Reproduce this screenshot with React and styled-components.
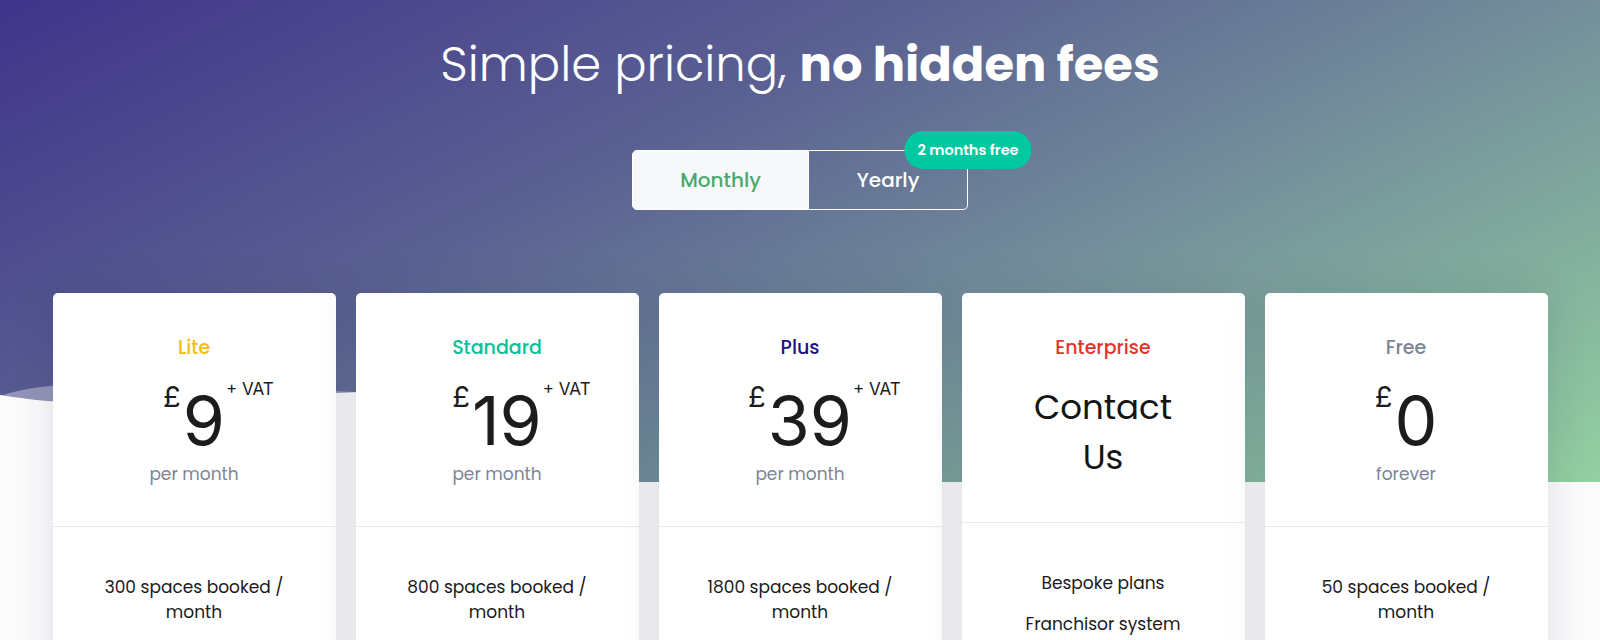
import React from "react";
import styled, { createGlobalStyle } from "styled-components";

const GlobalStyle = createGlobalStyle`
  html, body { margin: 0; padding: 0; }
  body {
    background: #fbfbfc;
    font-family: Poppins, Inter, "Open Sans", sans-serif;
    overflow: hidden;
  }
`;

const Page = styled.div`
  width: 1600px;
  min-height: 640px;
`;

const Hero = styled.header`
  position: relative;
  height: 482px;
  box-sizing: border-box;
  padding-top: 35px;
  background: linear-gradient(153deg, #40348b 0%, #5a6092 36%, #74909b 63%, #93d0a1 100%);
  display: flex;
  flex-direction: column;
  align-items: center;
`;

const Title = styled.h1`
  margin: 0;
  font-size: 48px;
  line-height: 60px;
  font-weight: 300;
  color: #fff;
  b { font-weight: 700; }
`;

const Toggle = styled.div`
  position: relative;
  display: flex;
  margin-top: 55px;
  height: 60px;
`;

const ToggleButton = styled.button`
  box-sizing: border-box;
  width: ${(p) => p.$w}px;
  height: 60px;
  border: 1px solid #fff;
  border-left-width: ${(p) => (p.$active ? 1 : 0)}px;
  border-radius: ${(p) => (p.$active ? "5px 0 0 5px" : "0 5px 5px 0")};
  background: ${(p) => (p.$active ? "#f6f8fa" : "transparent")};
  color: ${(p) => (p.$active ? "#49a86b" : "#fff")};
  font-family: inherit;
  font-size: 20px;
  font-weight: 500;
  padding: 0;
  cursor: pointer;
`;

const Badge = styled.span`
  position: absolute;
  left: 100%;
  top: 0;
  transform: translate(-50%, -50%);
  height: 38px;
  padding: 0 13px;
  border-radius: 19px;
  background: #00c8a0;
  color: #fff;
  font-size: 14.5px;
  font-weight: 600;
  line-height: 38px;
  white-space: nowrap;
`;

const Wave = styled.svg`
  position: absolute;
  left: 0;
  bottom: 0;
  width: 100%;
  height: 110px;
  display: block;
`;

const Cards = styled.section`
  position: relative;
  display: grid;
  grid-template-columns: repeat(5, 283px);
  gap: 20px;
  justify-content: center;
  margin-top: -189px;
`;

const Card = styled.article`
  background: #fff;
  border-radius: 5px;
  box-shadow: 0 0 40px rgba(28, 36, 70, 0.13);
  min-height: 420px;
`;

const CardHead = styled.div`
  padding: 40px 20px;
  text-align: center;
  border-bottom: 1px solid #e7e9ec;
`;

const PlanName = styled.div`
  font-size: 19px;
  line-height: 30px;
  font-weight: 500;
  color: ${(p) => p.$color};
`;

const Price = styled.div`
  margin-top: 22px;
  height: 70px;
  display: flex;
  justify-content: center;
`;

const PriceInner = styled.div`
  position: relative;
  display: flex;
  align-items: flex-start;
  font-family: Inter, "Liberation Sans", sans-serif;
  font-feature-settings: "pnum" 1;
  color: #1c1c1c;
`;

const Currency = styled.span`
  font-size: 29px;
  line-height: 28px;
  margin-top: -2px;
  margin-right: 2px;
`;

const Amount = styled.span`
  font-size: 68px;
  line-height: 70px;
`;

const Vat = styled.span`
  position: absolute;
  left: 100%;
  top: -4px;
  margin-left: 1px;
  font-size: 17px;
  line-height: 17px;
  white-space: nowrap;
`;

const Period = styled.div`
  margin-top: 7px;
  font-size: 17px;
  line-height: 24px;
  color: #7c8594;
`;

const ContactText = styled.div`
  margin: 19px auto 0;
  max-width: 160px;
  font-size: 34px;
  line-height: 50px;
  color: #141414;
`;

const CardBody = styled.ul`
  list-style: none;
  margin: 0;
  padding: 48px 32px 0;
  text-align: center;
  font-size: 17px;
  line-height: 25px;
  color: #1a1a1a;
`;

const Feature = styled.li`
  margin-bottom: 16px;
`;

const plans = [
  { name: "Lite", color: "#f5bd0c", amount: "9", period: "per month", features: ["300 spaces booked / month"] },
  { name: "Standard", color: "#06c29b", amount: "19", period: "per month", features: ["800 spaces booked / month"] },
  { name: "Plus", color: "#1e1087", amount: "39", period: "per month", features: ["1800 spaces booked / month"] },
  { name: "Enterprise", color: "#e2342b", contact: true, features: ["Bespoke plans", "Franchisor system"] },
  { name: "Free", color: "#7c8594", amount: "0", period: "forever", vat: false, features: ["50 spaces booked / month"] },
];

export default function App() {
  return (
    <Page>
      <GlobalStyle />
      <Hero>
        <Title>
          Simple pricing, <b>no hidden fees</b>
        </Title>
        <Toggle>
          <ToggleButton $active $w={177}>Monthly</ToggleButton>
          <ToggleButton $w={159}>Yearly</ToggleButton>
          <Badge>2 months free</Badge>
        </Toggle>
        <Wave viewBox="0 0 1600 110" preserveAspectRatio="none" aria-hidden="true">
          <path
            d="M0,24 C30,14 60,12 100,13 C200,15 300,18 360,20 C450,22 520,110 640,110 L0,110 Z"
            fill="rgba(255,255,255,0.35)"
          />
          <path
            d="M0,23 C30,28 60,31 100,31 C200,31 300,22 360,20 C450,22 520,110 640,110 L0,110 Z"
            fill="#fbfbfc"
          />
        </Wave>
      </Hero>
      <Cards>
        {plans.map((p) => (
          <Card key={p.name}>
            <CardHead>
              <PlanName $color={p.color}>{p.name}</PlanName>
              {p.contact ? (
                <ContactText>Contact Us</ContactText>
              ) : (
                <>
                  <Price>
                    <PriceInner>
                      <Currency>£</Currency>
                      <Amount>{p.amount}</Amount>
                      {p.vat !== false && <Vat>+ VAT</Vat>}
                    </PriceInner>
                  </Price>
                  <Period>{p.period}</Period>
                </>
              )}
            </CardHead>
            <CardBody>
              {p.features.map((f) => (
                <Feature key={f}>{f}</Feature>
              ))}
            </CardBody>
          </Card>
        ))}
      </Cards>
    </Page>
  );
}
